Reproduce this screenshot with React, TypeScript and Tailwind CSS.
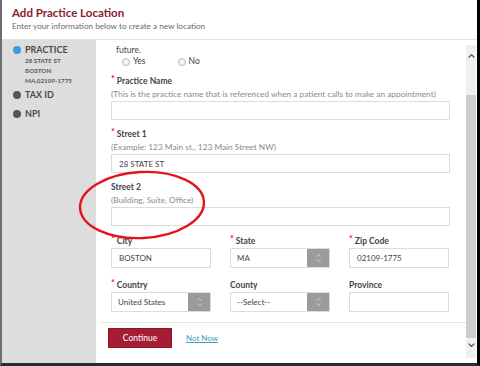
import { memo } from "react";

function Req() {
  return <span className="text-[#e4141b] text-[9px] leading-none self-start mr-[2px] -mt-[1px]">*</span>;
}

function Label({ text, required = true }: { text: string; required?: boolean }) {
  return (
    <div className="flex items-center h-[13px] text-[8.5px] font-bold text-[#444]">
      {required && <Req />}
      <span>{text}</span>
    </div>
  );
}

function Helper({ text }: { text: string }) {
  return <div className="h-[13px] flex items-center text-[8.3px] text-[#8a8a8a]">{text}</div>;
}

function Input({ value = "", className = "" }: { value?: string; className?: string }) {
  return (
    <div className={`h-[19px] border border-[#dcdcdc] bg-white flex items-center pl-[7px] text-[8px] text-[#444] ${className}`}>
      {value}
    </div>
  );
}

function Chevron({ down = false, color = "#444", size = 7 }: { down?: boolean; color?: string; size?: number }) {
  return (
    <svg width={size} height={size * 0.6} viewBox="0 0 10 6" fill="none">
      <path d={down ? "M1 1l4 4 4-4" : "M1 5l4-4 4 4"} stroke={color} strokeWidth="1.6" />
    </svg>
  );
}

function Select({ value }: { value: string }) {
  return (
    <div className="h-[20px] border border-[#dcdcdc] bg-white flex items-center text-[8px] text-[#444]">
      <span className="flex-1 pl-[6px]">{value}</span>
      <div className="w-[22px] h-full bg-[#9b9b9b] flex flex-col items-center justify-center gap-[2px]">
        <Chevron color="#d8d8d8" size={5} />
        <Chevron down color="#d8d8d8" size={5} />
      </div>
    </div>
  );
}

function SideItem({ name, active = false }: { name: string; active?: boolean }) {
  return (
    <div className="flex items-center h-[12px] pl-[11px]">
      <span className={`w-[8px] h-[8px] rounded-full ${active ? "bg-[#3b9ae1]" : "bg-[#555]"}`} />
      <span className="ml-[4px] text-[9px] font-bold text-[#4a4a4a]">{name}</span>
    </div>
  );
}

function App() {
  return (
    <div className="w-[480px] h-[366px] bg-white relative overflow-hidden flex flex-col border-l-2 border-l-[#6e6e6e] border-r-[3px] border-r-black border-b-[3px] border-b-[#2b2b2b] font-['Lato',sans-serif]">
      {/* Header */}
      <div className="h-[40px] border-b border-[#e4e4e4] pl-[10px] pt-[5px]">
        <div className="text-[11.5px] font-bold text-[#8b1c2c] leading-[15px]">Add Practice Location</div>
        <div className="text-[8.2px] text-[#6a6a6a] leading-[11px] mt-[1px]">Enter your information below to create a new location</div>
      </div>

      <div className="flex flex-1 min-h-0">
        {/* Sidebar */}
        <div className="w-[94px] bg-[#dddddd] pt-[4px]">
          <SideItem name="PRACTICE" active />
          <div className="pl-[23px] text-[6.3px] font-bold text-[#5a5a5a] leading-[10px]">
            <div>28 STATE ST</div>
            <div>BOSTON</div>
            <div>MA,02109-1775</div>
          </div>
          <div className="mt-[3px]">
            <SideItem name="TAX ID" />
          </div>
          <div className="mt-[7px]">
            <SideItem name="NPI" />
          </div>
        </div>

        {/* Main */}
        <div className="flex-1 flex">
          <div className="flex-1 flex flex-col">
            <div className="pl-[15px] pr-[16px] pt-[4px]">
              <div className="h-[12px] flex items-center pl-[5px] text-[8.5px] text-[#444]">future.</div>
              <div className="h-[11px] flex items-center pl-[11px] text-[8.5px] text-[#444]">
                <span className="w-[8px] h-[8px] rounded-full border border-[#bbb] bg-[#f4f4f4]" />
                <span className="ml-[3px]">Yes</span>
                <span className="ml-[32px] w-[8px] h-[8px] rounded-full border border-[#bbb] bg-[#f4f4f4]" />
                <span className="ml-[3px]">No</span>
              </div>

              <div className="mt-[8px]">
                <Label text="Practice Name" />
                <Helper text="(This is the practice name that is referenced when a patient calls to make an appointment)" />
                <Input />
              </div>

              <div className="mt-[8px]">
                <Label text="Street 1" />
                <Helper text="(Example: 123 Main st., 123 Main Street NW)" />
                <Input value="28 STATE ST" />
              </div>

              <div className="mt-[8px]">
                <Label text="Street 2" required={false} />
                <Helper text="(Building, Suite, Office)" />
                <Input />
              </div>

              <div className="mt-[8px] grid grid-cols-[100px_100px_100px] gap-x-[19px] gap-y-[10px]">
                <div>
                  <div className="h-[14px] flex items-center"><Label text="City" /></div>
                  <Input value="BOSTON" className="h-[20px]" />
                </div>
                <div>
                  <div className="h-[14px] flex items-center"><Label text="State" /></div>
                  <Select value="MA" />
                </div>
                <div>
                  <div className="h-[14px] flex items-center"><Label text="Zip Code" /></div>
                  <Input value="02109-1775" className="h-[20px]" />
                </div>
                <div>
                  <div className="h-[14px] flex items-center"><Label text="Country" /></div>
                  <Select value="United States" />
                </div>
                <div>
                  <div className="h-[14px] flex items-center"><Label text="County" required={false} /></div>
                  <Select value="--Select--" />
                </div>
                <div>
                  <div className="h-[14px] flex items-center"><Label text="Province" required={false} /></div>
                  <Input className="h-[20px]" />
                </div>
              </div>
            </div>

            <div className="ml-[5px] mt-[10px] border-t border-[#e4e4e4]" />

            <div className="pl-[12px] mt-[5px] flex items-center">
              <button className="w-[64px] h-[20px] bg-[#a51d35] border border-[#8c1428] text-white text-[8.5px]">Continue</button>
              <a className="ml-[14px] text-[8px] text-[#3a9fb4] underline">Not Now</a>
            </div>
          </div>

          {/* Scrollbar */}
          <div className="w-[10px] mr-px mt-[5px] mb-[5px] bg-[#f0f0f0] flex flex-col">
            <div className="h-[22px] flex items-center justify-center">
              <Chevron />
            </div>
            <div className="h-[28px]" />
            <div className="flex-1 bg-[#cdcdcd]" />
            <div className="h-[20px] flex items-start justify-center pt-[5px]">
              <Chevron down />
            </div>
          </div>
        </div>
      </div>

      {/* Annotation */}
      <svg className="absolute left-0 top-0 pointer-events-none" width="480" height="366">
        <ellipse cx="140" cy="205" rx="62" ry="33" fill="none" stroke="#e3131b" strokeWidth="2.4" transform="rotate(-3 140 205)" />
      </svg>
    </div>
  );
}

export default memo(App);
